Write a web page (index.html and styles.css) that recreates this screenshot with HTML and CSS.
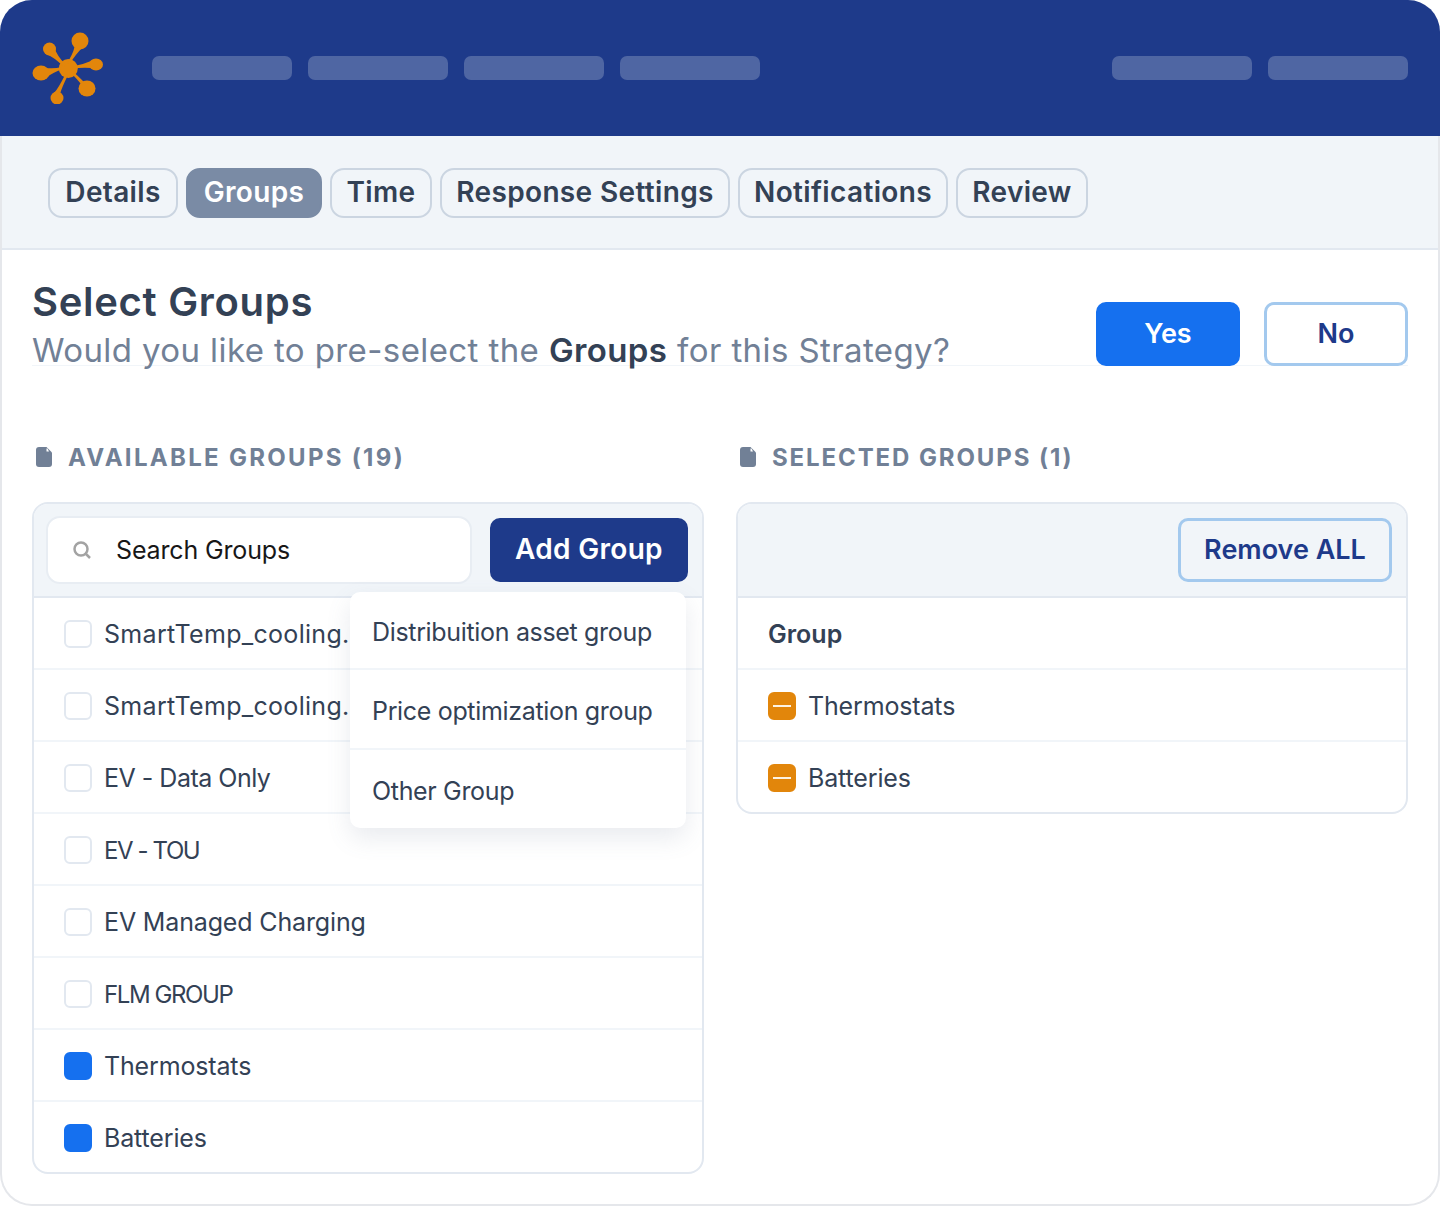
FILE: index.html
```html
<!DOCTYPE html>
<html>
<head>
  <title>Select Groups</title>
  <link rel="stylesheet" href="styles.css">
</head>
<body>
  <!-- Top bar -->
  <header class="topbar">
    <svg class="logo" width="76" height="72" viewBox="0 0 76 72">
      <g fill="#e2860b">
        <circle cx="36.300" cy="36.500" r="9.500"/>
        <path d="M42.500 15 Q41 22 35 31 L37.500 32 Q44 22 50 16z"/>
        <path d="M14 22 Q22 25 32 35 L33.500 32.500 Q25 24 22 15z"/>
        <path d="M59 29 Q50 33 40 34.500 L40 36.500 Q50 35.500 59 36z"/>
        <path d="M14 36 Q22 37 30 35 L30 37.500 Q21 40 14 46z"/>
        <path d="M49 52 Q45 47 39 41 L41 39.500 Q46 44 52 50z"/>
        <path d="M22 61 Q26 57 33.500 42 L36 43 Q30 55 28 62z"/>
        <circle cx="48" cy="9" r="8.500"/>
        <circle cx="17.500" cy="17" r="6.500"/>
        <ellipse cx="64" cy="32.500" rx="7" ry="6"/>
        <ellipse cx="9" cy="41" rx="8.500" ry="7.500"/>
        <ellipse cx="55" cy="56.500" rx="8.500" ry="8"/>
        <circle cx="25" cy="66" r="6.500"/>
      </g>
    </svg>
    <div class="nav-pills">
      <span class="pill"></span>
      <span class="pill"></span>
      <span class="pill"></span>
      <span class="pill"></span>
    </div>
    <div class="nav-pills nav-right">
      <span class="pill"></span>
      <span class="pill"></span>
    </div>
  </header>

  <div class="page">
    <!-- Steps -->
    <nav class="tabs">
      <a class="tab tab-details">Details</a>
      <a class="tab tab-groups active">Groups</a>
      <a class="tab tab-time">Time</a>
      <a class="tab tab-response">Response Settings</a>
      <a class="tab tab-notifications">Notifications</a>
      <a class="tab tab-review">Review</a>
    </nav>

    <main class="content">
      <div class="intro">
        <div>
          <h1>Select Groups</h1>
          <p class="question">Would you like to pre-select the <b>Groups</b> for this Strategy?</p>
        </div>
        <div class="choice">
          <button class="btn btn-yes">Yes</button>
          <button class="btn btn-no">No</button>
        </div>
      </div>

      <div class="columns">
        <section>
          <h2 class="label label-available">
            <svg width="16" height="20" viewBox="0 0 16 20"><path fill="#718096" d="M3 0h7.500L16 5.500V17a3 3 0 0 1-3 3H3a3 3 0 0 1-3-3V3a3 3 0 0 1 3-3z"/><path fill="#fff" d="M10.500 1.500h1l1.500 3h-2.500z"/></svg>
            Available Groups (19)
          </h2>
          <div class="panel">
            <!-- dropdown of the Add Group button -->
            <div class="menu">
              <div class="menu-item">Distribuition asset group</div>
              <div class="menu-item">Price optimization group</div>
              <div class="menu-item">Other Group</div>
            </div>
            <div class="toolbar">
              <div class="search">
                <svg width="20" height="20" viewBox="0 0 20 20" fill="none" stroke="#a3a3a3" stroke-width="2.500"><circle cx="9" cy="9" r="6.500"/><path d="M13.500 13.500L18 18"/></svg>
                <span>Search Groups</span>
              </div>
              <button class="btn btn-add">Add Group</button>
            </div>
            <div class="row"><span class="check"></span><span class="cut">SmartTemp_cooling.</span></div>
            <div class="row"><span class="check"></span><span class="cut">SmartTemp_cooling.</span></div>
            <div class="row"><span class="check"></span><span class="tight">EV - Data Only</span></div>
            <div class="row"><span class="check"></span><span class="caps">EV - TOU</span></div>
            <div class="row"><span class="check"></span>EV Managed Charging</div>
            <div class="row"><span class="check"></span><span class="caps">FLM GROUP</span></div>
            <div class="row"><span class="check checked"></span>Thermostats</div>
            <div class="row"><span class="check checked"></span>Batteries</div>
          </div>
        </section>

        <section>
          <h2 class="label label-selected">
            <svg width="16" height="20" viewBox="0 0 16 20"><path fill="#718096" d="M3 0h7.500L16 5.500V17a3 3 0 0 1-3 3H3a3 3 0 0 1-3-3V3a3 3 0 0 1 3-3z"/><path fill="#fff" d="M10.500 1.500h1l1.500 3h-2.500z"/></svg>
            Selected Groups (1)
          </h2>
          <div class="panel">
            <div class="toolbar toolbar-end">
              <button class="btn btn-remove">Remove ALL</button>
            </div>
            <div class="row row-head">Group</div>
            <div class="row"><span class="check minus"></span>Thermostats</div>
            <div class="row"><span class="check minus"></span>Batteries</div>
          </div>
        </section>
      </div>
    </main>
  </div>
</body>
</html>
```

FILE: styles.css
```css
body {
  margin: 0;
  background: #fff;
  font-family: Inter, "Liberation Sans", sans-serif;
  color: #334155;
}

.topbar {
  height: 136px;
  box-sizing: border-box;
  display: flex;
  align-items: center;
  padding: 0 32px;
  background: #1e3a8a;
  border-radius: 32px 32px 0 0;
}

.logo {
  flex: none;
  width: 76px;
  height: 72px;
  margin-right: 44px;
}

.nav-pills {
  display: flex;
  gap: 16px;
}

.nav-right {
  margin-left: auto;
}

.pill {
  width: 140px;
  height: 24px;
  border-radius: 7px;
  background: #4f66a3;
}

.page {
  border: 2px solid #e5e7eb;
  border-top: none;
  border-radius: 0 0 32px 32px;
  overflow: hidden;
}

.tabs {
  display: flex;
  gap: 8px;
  padding: 32px 46px 30px;
  background: #f1f5f9;
  border-bottom: 2px solid #e2e8f0;
}

.tab {
  height: 50px;
  box-sizing: border-box;
  display: flex;
  align-items: center;
  justify-content: center;
  padding-bottom: 2px;
  border: 2px solid #cbd5e1;
  border-radius: 14px;
  font-size: 28px;
  font-weight: 600;
  letter-spacing: 0.350px;
  white-space: nowrap;
}

.tab-details { width: 130px; }
.tab-groups { width: 136px; }
.tab-time { width: 102px; }
.tab-response { width: 290px; }
.tab-notifications { width: 210px; }
.tab-review { width: 132px; }

.tab.active {
  background: #7a8ba5;
  border-color: #7a8ba5;
  color: #fff;
}

.content {
  padding: 0 30px 30px;
}

.intro {
  display: flex;
  justify-content: space-between;
  align-items: flex-end;
  height: 116px;
  box-sizing: border-box;
  padding-top: 28px;
  box-shadow: inset 0 -1px 0 #f1f5f9;
}

h1 {
  margin: 0;
  font-size: 40px;
  line-height: 48px;
  font-weight: 600;
  letter-spacing: 0.700px;
}

.question {
  margin: 0 0 -8px;
  font-size: 33px;
  line-height: 48px;
  letter-spacing: 0.400px;
  color: #718096;
}

.question b {
  font-weight: 600;
  color: #334155;
}

.choice {
  display: flex;
  gap: 24px;
}

.btn {
  height: 64px;
  box-sizing: border-box;
  border: 3px solid #a3c9ee;
  border-radius: 10px;
  background: #fff;
  color: #1e3a8a;
  font-family: inherit;
  font-size: 27px;
  font-weight: 600;
  padding: 0 0 2px;
}

.btn-yes, .btn-no {
  width: 144px;
}

.btn-yes {
  background: #1570ef;
  border-color: #1570ef;
  color: #fff;
}

.btn-add {
  flex: none;
  width: 198px;
  background: #1e3a8a;
  border-color: #1e3a8a;
  color: #fff;
  font-size: 28px;
  letter-spacing: 0.300px;
}

.btn-remove {
  width: 214px;
  background: #f1f5f9;
}

.columns {
  display: grid;
  grid-template-columns: 672px 672px;
  gap: 32px;
  padding-top: 71px;
}

.label {
  display: flex;
  align-items: center;
  height: 40px;
  margin: 0 0 25px;
  padding-left: 4px;
  font-size: 24px;
  font-weight: 700;
  text-transform: uppercase;
  color: #718096;
  white-space: nowrap;
}

.label svg {
  flex: none;
  margin-right: 16px;
}

.label-available { letter-spacing: 2.300px; }
.label-selected { letter-spacing: 1.900px; }

.panel {
  position: relative;
  border: 2px solid #e2e8f0;
  border-radius: 16px;
  overflow: hidden;
}

.toolbar {
  height: 94px;
  box-sizing: border-box;
  display: flex;
  align-items: center;
  gap: 18px;
  padding: 0 14px 0 12px;
  background: #f1f5f9;
  border-bottom: 2px solid #e2e8f0;
}

.toolbar-end {
  justify-content: flex-end;
}

.search {
  flex: 1;
  height: 68px;
  box-sizing: border-box;
  display: flex;
  align-items: center;
  gap: 24px;
  padding-left: 24px;
  background: #fff;
  border: 2px solid #e8edf3;
  border-radius: 14px;
  font-size: 25px;
  letter-spacing: -0.150px;
  color: #171717;
}

.row {
  height: 72px;
  box-sizing: border-box;
  display: flex;
  align-items: center;
  gap: 12px;
  padding: 2px 0 0 30px;
  border-bottom: 2px solid #f1f5f9;
  font-size: 25px;
  letter-spacing: -0.150px;
  white-space: nowrap;
}

.row:last-child {
  height: 70px;
  border-bottom: none;
}

.row-head {
  font-weight: 600;
  letter-spacing: 0;
}

.cut { letter-spacing: 0.300px; }
.tight { letter-spacing: -0.500px; }
.caps { font-size: 24px; letter-spacing: -1.400px; }

.check {
  position: relative;
  flex: none;
  width: 28px;
  height: 28px;
  box-sizing: border-box;
  border: 2px solid #e2e8f0;
  border-radius: 6px;
  background: #fff;
}

.check.checked {
  background: #1570ef;
  border-color: #1570ef;
}

.check.minus {
  background: #e2860b;
  border-color: #e2860b;
}

.check.minus::after {
  content: '';
  position: absolute;
  left: 3px;
  right: 3px;
  top: 11px;
  height: 2px;
  background: #fdf3e3;
}

.menu {
  position: absolute;
  z-index: 1;
  left: 316px;
  top: 88px;
  width: 336px;
  background: #fff;
  border-radius: 10px;
  box-shadow: 0 10px 24px rgba(100, 116, 139, 0.14);
}

.menu-item {
  height: 80px;
  box-sizing: border-box;
  display: flex;
  align-items: center;
  padding: 3px 22px 0;
  border-bottom: 2px solid #f1f5f9;
  font-size: 25px;
  letter-spacing: -0.330px;
  white-space: nowrap;
}

.menu-item:first-child {
  height: 78px;
}

.menu-item:last-child {
  border-bottom: none;
  height: 78px;
}
```
